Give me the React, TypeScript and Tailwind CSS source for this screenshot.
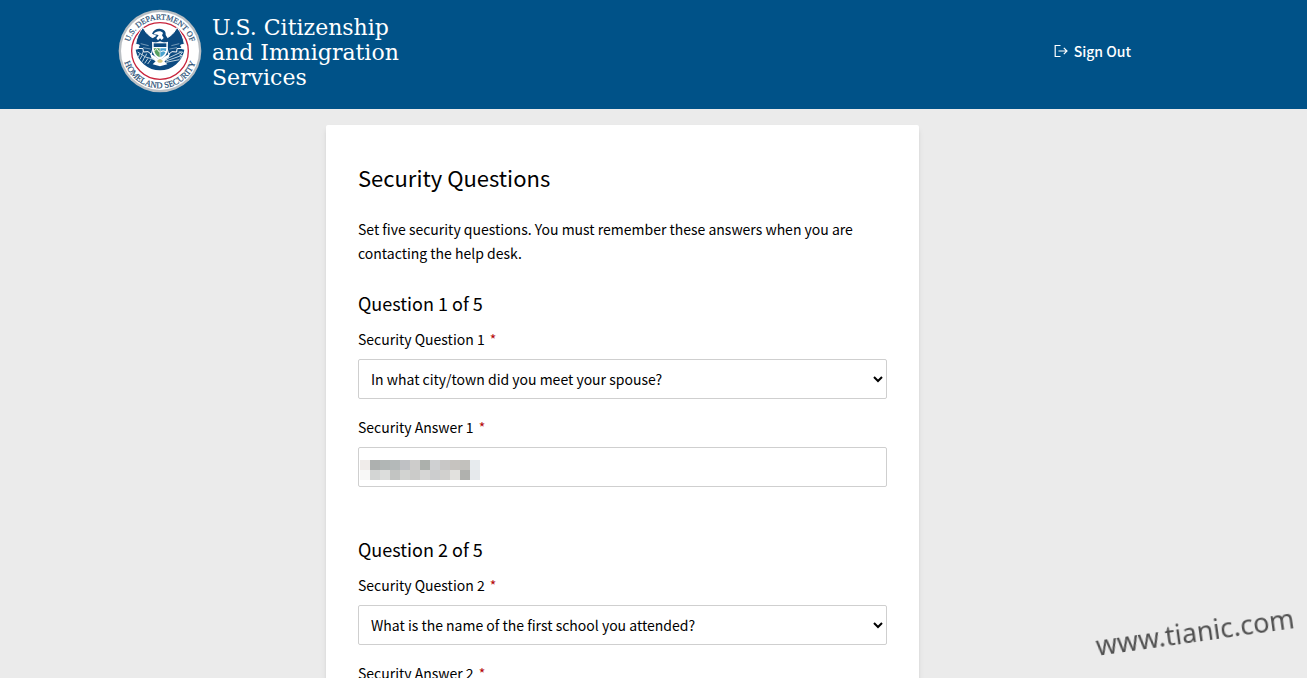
import { useState } from 'react';
import { clsx } from 'clsx';

interface SecurityQuestion {
  question: string;
  answer: string;
  masked?: boolean;
}

const QUESTION_OPTIONS = [
  'In what city/town did you meet your spouse?',
  'What is the name of the first school you attended?',
];

const INITIAL_QUESTIONS: SecurityQuestion[] = [
  { question: QUESTION_OPTIONS[0], answer: '', masked: true },
  { question: QUESTION_OPTIONS[1], answer: '' },
];

const MASK_CELLS = [
  'bg-[#f0ecea]', 'bg-[#adb0af]', 'bg-[#b1b6b5]', 'bg-[#b4b9b9]', 'bg-[#bfc1c4]', 'bg-[#cdcccb]',
  'bg-[#acb0ac]', 'bg-[#cfd0d2]', 'bg-[#c8c7c6]', 'bg-[#c6c3bf]', 'bg-[#c2c1bd]', 'bg-[#e7ebee]',
  'bg-[#f8f8f7]', 'bg-[#d3d5d4]', 'bg-[#dcdddc]', 'bg-[#c2c4c2]', 'bg-[#d2d3d1]', 'bg-[#cbcbc9]',
  'bg-[#d6d6d5]', 'bg-[#cccdce]', 'bg-[#d1d0ce]', 'bg-[#e2e1de]', 'bg-[#b0b1ae]', 'bg-[#e6e9ec]',
];

function Seal() {
  return (
    <svg viewBox="0 0 252 252" className="h-[84px] w-[84px] shrink-0" role="img" aria-label="U.S. Department of Homeland Security">
      <defs>
        <path id="seal-top" d="M33 146 A95 95 0 1 1 219 146" />
        <path id="seal-bottom" d="M15 111 A112 112 0 1 0 237 111" />
      </defs>
      <circle cx="126" cy="126" r="124" fill="#b9bfc4" />
      <circle cx="126" cy="126" r="117" fill="#fff" />
      <circle cx="126" cy="126" r="85" fill="none" stroke="#c8243c" strokeWidth="4" />
      {/* lower field */}
      <path d="M53 122 Q90 112 126 126 Q162 112 199 122 A74 74 0 0 1 53 122 Z" fill="#0b4a80" />
      {/* wings */}
      <g fill="#0b4a80" stroke="#fff" strokeWidth="3">
        <path d="M75 55 C62 72 55 88 53 106 L64 108 L60 118 L75 119 L76 129 L90 128 L100 136 L108 104 L119 93 C104 86 88 82 75 55 Z" />
        <path d="M177 55 C190 72 197 88 199 106 L188 108 L192 118 L177 119 L176 129 L162 128 L152 136 L144 104 L133 93 C148 86 164 82 177 55 Z" />
      </g>
      <path d="M68 104 L92 110 M75 116 L98 120 M184 104 L160 110 M177 116 L154 120" stroke="#a9c2d5" strokeWidth="2" />
      {/* head */}
      <path d="M102 74 C107 62 118 58 128 60 C139 61 144 69 143 78 L149 88 L140 101 H111 L104 88 L116 80 Z" fill="#0b4a80" />
      <path d="M107 75 C113 66 129 64 135 72 L132 79 L137 87 L131 93 L126 88 L120 94 L115 88 L122 79 C117 76 112 78 107 75 Z" fill="#fff" />
      {/* shield */}
      <path d="M102 98 Q115 103 126 97 Q137 103 150 98 L149 124 Q146 144 126 153 Q106 144 103 124 Z" fill="#fff" />
      <path d="M107 103 H145 V114 H107 Z" fill="#0b4a80" />
      <path d="M107 118 H125 V145 Q109 139 107 118 Z" fill="#57a05e" />
      <path d="M127 118 H145 Q144 138 127 145 Z" fill="#4aa3cf" />
      <path d="M107 128 L116 119 L125 130 M128 128 Q135 123 144 128" fill="none" stroke="#fff" strokeWidth="3" />
      {/* tail and claws */}
      <path d="M96 133 L110 142 L126 153 L142 142 L156 133 L151 149 L139 157 L148 166 L126 172 L104 166 L113 157 L101 149 Z" fill="#fff" />
      <path d="M117 156 Q126 146 135 156 L130 161 H122 Z" fill="#d6ca82" />
      {/* branch and arrows */}
      <path
        d="M109 151 Q83 149 59 129 M65 134 L61 145 M72 139 L66 151 M80 144 L73 158 M90 148 L80 163 M72 138 L74 130 M82 143 L86 134 M99 151 L89 165 M143 151 L190 129 M144 156 L192 139 M144 160 L184 152 M182 129 L194 129 L187 138 M184 138 L194 141 L185 149"
        fill="none"
        stroke="#bfd3df"
        strokeWidth="3"
      />
      <g fill="#2a5076" fontSize="24" fontFamily="'Liberation Serif', serif" stroke="#2a5076" strokeWidth="0.6">
        <text textAnchor="middle">
          <textPath href="#seal-top" startOffset="50%">U.S. DEPARTMENT OF</textPath>
        </text>
        <text fontSize="26" textAnchor="middle">
          <textPath href="#seal-bottom" startOffset="50%">HOMELAND SECURITY</textPath>
        </text>
      </g>
    </svg>
  );
}

function SignOutIcon() {
  return (
    <svg viewBox="0 0 14 14" className="h-3.5 w-3.5" fill="none" stroke="currentColor" strokeWidth="1.2" aria-hidden="true">
      <path d="M6.5 1.5 H1.2 V12.5 H6.5 M4.5 7 H13 M9.8 3.8 L13 7 L9.8 10.2" />
    </svg>
  );
}

function Header() {
  return (
    <header className="flex items-start justify-between bg-[#005288] pr-44 pl-[118px] text-white">
      <a href="#home" className="flex gap-2.5 pt-[9px] pb-4">
        <Seal />
        <span className="pt-1.5 font-['DejaVu_Serif',serif] text-[22px] leading-[25px]">
          U.S. Citizenship
          <br />
          and Immigration
          <br />
          Services
        </span>
      </a>
      <button type="button" className="mt-[39px] flex items-center gap-1.5 text-sm leading-6 font-medium">
        <SignOutIcon />
        Sign Out
      </button>
    </header>
  );
}

function FieldLabel({ htmlFor, children }: { htmlFor: string; children: string }) {
  return (
    <label htmlFor={htmlFor} className="mb-2 block leading-6">
      {children} <span className="ml-0.5 text-[#b50909]">*</span>
    </label>
  );
}

interface QuestionFieldsProps {
  index: number;
  total: number;
  value: SecurityQuestion;
  onChange: (value: SecurityQuestion) => void;
}

function QuestionFields({ index, total, value, onChange }: QuestionFieldsProps) {
  const questionId = `question-${index}`;
  const answerId = `answer-${index}`;

  return (
    <section>
      <h2 className="mb-2.5 text-lg leading-7">
        Question {index} of {total}
      </h2>
      <FieldLabel htmlFor={questionId}>{`Security Question ${index}`}</FieldLabel>
      <select
        id={questionId}
        value={value.question}
        onChange={(e) => onChange({ ...value, question: e.target.value })}
        className="mb-4 block h-10 w-full rounded-xs border border-[#cfcfcf] bg-white pl-2"
      >
        {QUESTION_OPTIONS.map((option) => (
          <option key={option}>{option}</option>
        ))}
      </select>
      <FieldLabel htmlFor={answerId}>{`Security Answer ${index}`}</FieldLabel>
      <div className="relative">
        <input
          id={answerId}
          type="text"
          value={value.answer}
          onChange={(e) => onChange({ ...value, answer: e.target.value })}
          className="block h-10 w-full rounded-xs border border-[#cfcfcf] bg-white px-3"
        />
        {value.masked && (
          <div className="pointer-events-none absolute top-[13px] left-0.5 grid grid-cols-12">
            {MASK_CELLS.map((color, i) => (
              <span key={i} className={clsx('h-2.5 w-2.5', color)} />
            ))}
          </div>
        )}
      </div>
    </section>
  );
}

export default function App() {
  const [questions, setQuestions] = useState(INITIAL_QUESTIONS);

  const updateQuestion = (index: number, value: SecurityQuestion) => {
    setQuestions(questions.map((q, i) => (i === index ? value : q)));
  };

  return (
    <div className="min-h-screen bg-[#ebebeb] font-['Noto_Sans_CJK_SC',sans-serif] text-sm text-black">
      <Header />
      <main className="pt-4 pr-[62px]">
        <div className="mx-auto max-w-[593px] rounded-xs bg-white p-8 shadow-md">
          <h1 className="mb-5 text-[22px] leading-10">Security Questions</h1>
          <p className="mb-6 leading-6">
            Set five security questions. You must remember these answers when you are contacting the help desk.
          </p>
          <form className="flex flex-col gap-12">
            {questions.map((q, i) => (
              <QuestionFields key={i} index={i + 1} total={5} value={q} onChange={(value) => updateQuestion(i, value)} />
            ))}
          </form>
        </div>
      </main>
      <div className="pointer-events-none fixed right-3 bottom-7 -rotate-8 font-['Noto_Sans',sans-serif] text-[27px] leading-9 text-[#505050]">
        www.tianic.com
      </div>
    </div>
  );
}
